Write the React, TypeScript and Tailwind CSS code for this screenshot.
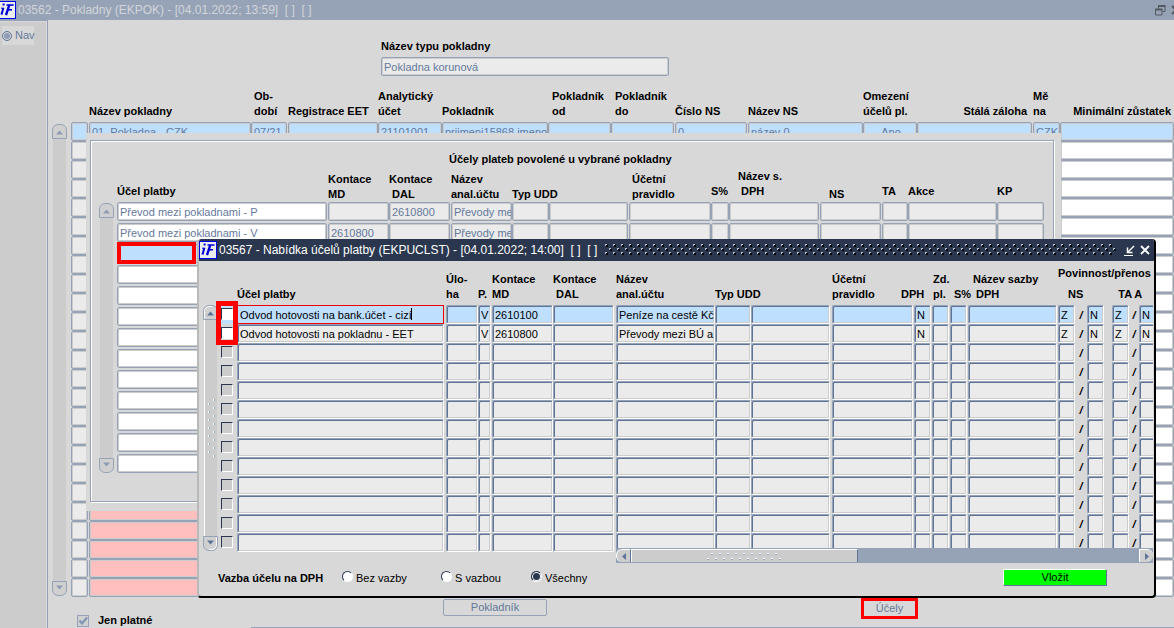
import React from "react";

type Column = {
  head?: string;
  headClass?: string;
  textClass?: string;
  name: string;
  width: string;
  gap?: string;
  align?: string;
  tone?: string;
};

const mainColumns: Column[] = [
  { name: "Výběr", width: "w-[18px]", gap: "pr-px" },
  { name: "Název pokladny", head: "Název pokladny", width: "w-[162px]" },
  { name: "Období", head: "Ob-\ndobí", width: "w-[37px]", gap: "pr-px", headClass: "pl-[3px]" },
  { name: "Registrace EET", head: "Registrace EET", width: "w-[90px]" },
  { name: "Analytický účet", head: "Analytický\núčet", width: "w-[64px]" },
  { name: "Pokladník", head: "Pokladník", width: "w-[106px]" },
  { name: "Pokladník od", head: "Pokladník\nod", width: "w-[63px]", headClass: "pl-[4px]" },
  { name: "Pokladník do", head: "Pokladník\ndo", width: "w-[64px]", gap: "pr-px", headClass: "pl-[4px]" },
  { name: "Číslo NS", head: "Číslo NS", width: "w-[73px]", gap: "pr-px" },
  { name: "Název NS", head: "Název NS", width: "w-[115px]" },
  { name: "Omezení účelů pl.", head: "Omezení\núčelů pl.", width: "w-[54px]", align: "text-center" },
  { name: "Stálá záloha", head: "Stálá záloha", width: "w-[116px]", gap: "pr-px", headClass: "text-right pr-[6px]" },
  { name: "Měna", head: "Mě\nna", width: "w-[27px]" },
  { name: "Minimální zůstatek", head: "Minimální zůstatek", width: "w-auto", headClass: "text-right pr-[3px]", tone: "bg-white" },
];

const mainFirstRow = [
  "", "01. Pokladna - CZK", "07/21", "", "21101001", "prijmeni15868 jmeno1", "", "", "0", "název 0", "Ano", "", "CZK", "",
];

const purposeColumns: Column[] = [
  { name: "Účel platby", head: "Účel platby", width: "w-[211px]", gap: "pr-px", headClass: "pb-[3px]", tone: "bg-white" },
  { name: "Kontace MD", head: "Kontace\nMD", width: "w-[61px]" },
  { name: "Kontace DAL", head: "Kontace\n DAL", width: "w-[62px]", gap: "pr-px" },
  { name: "Název anal.účtu", head: "Název\nanal.účtu", width: "w-[61px]" },
  { name: "Typ UDD", head: "Typ UDD", width: "w-[37px]" },
  { name: "Typ UDD popis", width: "w-[80px]", gap: "pr-px" },
  { name: "Účetní pravidlo", head: "Účetní\npravidlo", width: "w-[82px]", headClass: "pl-[3px]" },
  { name: "S%", head: "S%", width: "w-[18px]", headClass: "pb-[3px]" },
  { name: "Název s. DPH", head: "Název s.\n DPH", width: "w-[91px]", gap: "pr-px", headClass: "pl-[9px] pb-[3px]" },
  { name: "NS", head: "NS", width: "w-[62px]", gap: "pr-px", headClass: "pl-[9px]" },
  { name: "TA", head: "TA", width: "w-[26px]", headClass: "pb-[3px]" },
  { name: "Akce", head: "Akce", width: "w-[89px]", headClass: "pb-[3px]" },
  { name: "KP", head: "KP", width: "w-[47px]", headClass: "pb-[3px]" },
];

const purposeRows = [
  ["Převod mezi pokladnami - P", "", "2610800", "Převody me"],
  ["Převod mezi pokladnami - V", "2610800", "", "Převody me"],
];

const offerLeft: Column[] = [
  { name: "Účel platby", head: "Účel platby", width: "w-[209px]", gap: "pr-[2px]" },
  { name: "Úloha", head: "Úlo-\nha", width: "w-[32px]" },
  { name: "P.", head: "P.", width: "w-[14px]", gap: "pr-px" },
  { name: "Kontace MD", head: "Kontace\nMD", width: "w-[61px]" },
  { name: "Kontace DAL", head: "Kontace\n DAL", width: "w-[63px]", gap: "pr-[2px]" },
];

const offerRight: Column[] = [
  { name: "Název anal.účtu", head: "Název\nanal.účtu", width: "w-[99px]" },
  { name: "Typ UDD", head: "Typ UDD", width: "w-[36px]" },
  { name: "Typ UDD popis", width: "w-[81px]", gap: "pr-[2px]" },
  { name: "Účetní pravidlo", head: "Účetní\npravidlo", width: "w-[82px]", gap: "pr-px" },
  { name: "DPH", head: "DPH", width: "w-[18px]", gap: "pr-px", textClass: "-ml-[13px]" },
  { name: "Zd. pl.", head: "Zd.\npl.", width: "w-[18px]", gap: "pr-px", headClass: "pl-px" },
  { name: "S%", head: "S%", width: "w-[18px]", gap: "pr-px", headClass: "pl-[4px]" },
  { name: "Název sazby DPH", head: "Název sazby\n DPH", width: "w-[90px]", gap: "pr-px", headClass: "pl-[5px]" },
  { name: "NS", width: "w-[17px]" },
  { name: "/", width: "w-[12px]" },
  { name: "NS přenos", width: "w-[25px]", gap: "pr-[8px]" },
  { name: "TA", width: "w-[17px]" },
  { name: "/", width: "w-[10px]" },
  { name: "TA přenos", width: "w-[17px]" },
];

const offerLeftRows = [
  ["Odvod hotovosti na bank.účet - cizí", "", "V", "2610100", ""],
  ["Odvod hotovosti na pokladnu - EET", "", "V", "2610800", ""],
];
const offerRightRows = [
  ["Peníze na cestě Kč", "", "", "", "N", "", "", "", "Z", "/", "N", "Z", "/", "N"],
  ["Převody mezi BÚ a", "", "", "", "N", "", "", "", "Z", "/", "N", "Z", "/", "N"],
];

const range = (n: number) => Array.from({ length: n }, (_, i) => i);

const flatCell =
  "block h-[19px] w-full rounded-[2px] border border-[#96a3b6] pl-[2px] text-[11px] text-[#64799b] shadow-[inset_1px_1px_0_#ccc,inset_-1px_-1px_0_#ccc] outline-none";
const sunkCell =
  "block h-[19px] w-full rounded-[2px] border border-t-[#96a3b6] border-l-[#96a3b6] border-r-white border-b-white pl-[2px] text-[11px] text-black shadow-[inset_1px_1px_0_#5f7496,inset_-1px_-1px_0_#ccc] outline-none";
const focusCell = "block h-[19px] w-full border border-[#f00000] pl-[2px] text-[11px] text-black outline-none";

function Logo() {
  return (
    <svg width="18" height="18" viewBox="0 0 18 18" className="shrink-0" aria-hidden="true">
      <rect x="0.5" y="0.5" width="17" height="17" fill="#eceded" stroke="#0000f0" />
      <path d="M5.400 7 3.600 13" stroke="#0000d8" strokeWidth="2" fill="none" />
      <path d="M3 7.200h3M2.600 13h2.400" stroke="#0000d8" strokeWidth="1" />
      <path d="M4.600 3.500h2" stroke="#0000d8" strokeWidth="2" />
      <path d="M15.600 4H8.500" stroke="#0000d8" strokeWidth="1.600" />
      <path d="M11.300 4 8 14.200" stroke="#0000d8" strokeWidth="2.400" />
      <path d="M9.800 8.800h4.200" stroke="#0000d8" strokeWidth="1.600" />
    </svg>
  );
}

function ScrollButton({ down, strong }: { down?: boolean; strong?: boolean }) {
  const tri = strong ? "#5c7396" : "#8d9db5";
  return (
    <button type="button" aria-label={down ? "Dolů" : "Nahoru"} className="block h-[15px] w-[15px]">
      <svg width="15" height="15" viewBox="0 0 15 15" className={down ? "rotate-180" : ""}>
        <path d="M.5 14.500V6C.5 2.500 3.500.5 6 .5h3c2.500 0 5.500 2 5.500 5.500v8.500z" fill="#d0d0d0" stroke="#96a3b6" />
        {strong && <path d="M1.500 13.500V6.200C1.500 3.500 4 1.500 6.200 1.500h3" fill="none" stroke="#fff" />}
        <path d="M4 10.500 7.500 6.500 11 10.500z" fill={tri} />
      </svg>
    </button>
  );
}

function VerticalScroll({ strong }: { strong?: boolean }) {
  return (
    <div className="flex w-[15px] shrink-0 flex-col">
      <ScrollButton strong={strong} />
      <div
        className={
          strong
            ? "mx-px flex flex-1 items-center justify-center border-l border-white bg-[#ccc]"
            : "mx-px flex-1 bg-[#ccc]"
        }
      >
        {strong && (
          <svg width="9" height="60" aria-hidden="true">
            {range(15).map((i) => (
              <g key={i}>
                <rect x={i % 2 ? 1 : 6} y={i * 4 + 1} width="2" height="2" fill="#96a3b6" />
                <rect x={i % 2 ? 1 : 6} y={i * 4 + 1} width="1" height="2" fill="#fff" />
              </g>
            ))}
          </svg>
        )}
      </div>
      <ScrollButton down strong={strong} />
    </div>
  );
}

function HeadCell({ column, base }: { column: Column; base: string }) {
  return (
    <th scope="col" className={`${column.headClass ?? ""} ${base} align-bottom whitespace-pre`}>
      {column.textClass ? <span className={column.textClass}>{column.head}</span> : column.head}
    </th>
  );
}

function Columns({ columns }: { columns: Column[] }) {
  return (
    <>
      {columns.map((c, i) => (
        <col key={i} className={c.width} />
      ))}
    </>
  );
}

function MainTable() {
  return (
    <table className="flex-1 table-fixed border-separate border-spacing-0 text-left">
      <colgroup>
        <Columns columns={mainColumns} />
      </colgroup>
      <thead>
        <tr>
          {mainColumns.map((c) => (
            <HeadCell key={c.name} column={c} base="h-[33px] pt-0 pb-[3px]" />
          ))}
        </tr>
      </thead>
      <tbody>
        {range(25).map((r) => (
          <tr key={r}>
            {mainColumns.map((c, i) => {
              const tone = r === 0 ? "bg-[#bfdfff]" : i === 1 && r > 19 ? "bg-[#ffbfbf]" : c.tone ?? "bg-[#ebebeb]";
              return (
                <td key={c.name} className={`p-0 ${c.gap ?? ""}`}>
                  <input
                    aria-label={`${c.name} ${r + 1}`}
                    defaultValue={r === 0 ? mainFirstRow[i] : ""}
                    className={`${flatCell} ${tone} ${c.align ?? ""}`}
                  />
                </td>
              );
            })}
          </tr>
        ))}
      </tbody>
    </table>
  );
}

function PurposePanel() {
  return (
    <section className="absolute top-[133px] left-[86px] w-[975px] bg-[#d8d8d8] pt-[7px] pr-[7px] pb-[9px] pl-[4px]">
      <div className="border border-[#96a3b6] pt-[11px] pb-[26px] pl-[8px] shadow-[inset_1px_1px_0_#fff,1px_1px_0_#fff]">
        <h2 className="pl-[350px] leading-[15px] font-bold">Účely plateb povolené u vybrané pokladny</h2>
        <div className="mt-[2px] flex gap-[3px]">
          <div className="flex pt-[34px] pb-[2px]">
            <VerticalScroll />
          </div>
          <table className="w-[927px] table-fixed border-separate border-spacing-0 text-left">
            <colgroup>
              <Columns columns={purposeColumns} />
            </colgroup>
            <thead>
              <tr>
                {purposeColumns.map((c) => (
                  <HeadCell key={c.name} column={c} base="h-[33px] pt-0" />
                ))}
              </tr>
            </thead>
            <tbody>
              {range(13).map((r) => (
                <tr key={r}>
                  {purposeColumns.map((c, i) => (
                    <td key={c.name} className={`relative p-0 ${c.gap ?? ""}`}>
                      <input
                        aria-label={`${c.name} ${r + 1}`}
                        defaultValue={purposeRows[r]?.[i] ?? ""}
                        className={`${flatCell} mb-[2px] ${r === 2 ? "bg-[#bfdfff]" : c.tone ?? "bg-[#ebebeb]"}`}
                      />
                      {r === 2 && i === 0 && (
                        <span className="pointer-events-none absolute -top-[2px] left-0 h-[22px] w-[79px] border-4 border-[#ff0000]" />
                      )}
                    </td>
                  ))}
                </tr>
              ))}
            </tbody>
          </table>
        </div>
      </div>
    </section>
  );
}

function OfferRow({ columns, values, row }: { columns: Column[]; values?: string[]; row: number }) {
  return (
    <>
      {columns.map((c, i) => {
        if (c.name === "/") {
          return (
            <td key={i} className="h-[19px] p-0 pt-px text-center leading-[18px] font-bold italic">
              /
            </td>
          );
        }
        const focused = row === 0 && c.name === "Účel platby";
        return (
          <td key={i} className={`relative p-0 ${c.gap ?? ""}`}>
            <input
              aria-label={`${c.name} ${row + 1}`}
              defaultValue={values?.[i] ?? ""}
              className={`${focused ? focusCell : sunkCell} ${row === 0 ? "bg-[#bfdfff]" : "bg-[#ebebeb]"}`}
            />
          </td>
        );
      })}
    </>
  );
}

function OfferDialog() {
  return (
    <section
      role="dialog"
      aria-label="Nabídka účelů platby"
      className="absolute top-[239px] left-[197px] w-[959px] overflow-hidden rounded-[4px] border-r-2 border-b-2 border-l-2 border-r-black border-b-black border-l-[#b9b9b9] bg-[#d8d8d8]"
    >
      <header className="flex h-[22px] items-center bg-[#2a374e] pr-[4px] text-[12px] text-white">
        <Logo />
        <h2 className="ml-[2px] whitespace-pre">03567 - Nabídka účelů platby (EKPUCLST) - [04.01.2022; 14:00]  [ ]  [ ]</h2>
        <svg className="mx-[8px] h-[12px] min-w-0 flex-1" aria-hidden="true">
          <defs>
            <pattern id="grip" width="8" height="8" patternUnits="userSpaceOnUse">
              <rect x="1" y="1" width="2" height="2" fill="#000" />
              <rect x="0" y="0" width="2" height="1" fill="#b4bfce" />
              <rect x="0" y="1" width="1" height="1" fill="#b4bfce" />
              <rect x="5" y="5" width="2" height="2" fill="#000" />
              <rect x="4" y="4" width="2" height="1" fill="#b4bfce" />
              <rect x="4" y="5" width="1" height="1" fill="#b4bfce" />
            </pattern>
          </defs>
          <rect width="100%" height="100%" fill="url(#grip)" />
        </svg>
        <button type="button" aria-label="Minimalizovat" className="mr-[5px]">
          <svg width="11" height="11" viewBox="0 0 11 11" stroke="#fff" fill="none">
            <path d="M0 10.500h9" />
            <path d="M10 1 4 7" strokeWidth="1.500" />
            <path d="M3.500 2.500v5h5" strokeWidth="1.500" />
          </svg>
        </button>
        <button type="button" aria-label="Zavřít">
          <svg width="10" height="10" viewBox="0 0 10 10" stroke="#fff" strokeWidth="1.800">
            <path d="M1 1l8 8M9 1l-8 8" />
          </svg>
        </button>
      </header>

      <div className="flex pt-[5px] pl-[4px]">
        <div className="flex pt-[39px] pb-[12px]">
          <VerticalScroll strong />
        </div>
        <table className="w-[398px] shrink-0 table-fixed border-separate border-spacing-0 self-start text-left">
          <colgroup>
            <col className="w-[19px]" />
            <Columns columns={offerLeft} />
          </colgroup>
          <thead>
            <tr>
              <th scope="col" aria-label="Výběr" />
              {offerLeft.map((c) => (
                <HeadCell key={c.name} column={c} base="h-[39px] pb-[3px]" />
              ))}
            </tr>
          </thead>
          <tbody>
            {range(13).map((r) => (
              <tr key={r}>
                <td className={`p-0 ${r === 0 ? "bg-[#bfdfff]" : ""}`}>
                  <input
                    type="checkbox"
                    aria-label={`Vybrat ${r + 1}`}
                    className={`mb-px ml-[3px] block h-[12px] w-[12px] appearance-none border border-t-[#2a374e] border-l-[#2a374e] border-r-white border-b-white ${r < 2 ? "bg-white" : "bg-[#ccc]"}`}
                  />
                </td>
                <OfferRow columns={offerLeft} values={offerLeftRows[r]} row={r} />
              </tr>
            ))}
          </tbody>
        </table>
        <div className="mr-px min-w-0 flex-1">
          <div className="h-[282px] overflow-hidden">
            <table className="w-[540px] table-fixed border-separate border-spacing-0 text-left">
              <colgroup>
                <Columns columns={offerRight} />
              </colgroup>
              <thead>
                <tr>
                  {offerRight.slice(0, 8).map((c) => (
                    <HeadCell key={c.name} column={c} base="h-[39px] pb-[3px]" />
                  ))}
                  <th scope="colgroup" colSpan={6} className="p-0 pb-[3px] align-bottom whitespace-pre">
                    <div className="mb-[6px]">Povinnost/přenos</div>
                    <div className="flex gap-[35px] pl-[10px]">
                      <span>NS</span>
                      <span>TA A</span>
                    </div>
                  </th>
                </tr>
              </thead>
              <tbody>
                {range(13).map((r) => (
                  <tr key={r}>
                    <OfferRow columns={offerRight} values={offerRightRows[r]} row={r} />
                  </tr>
                ))}
              </tbody>
            </table>
          </div>
          <div className="flex h-[15px] bg-[#96a3b6] py-px">
            <button type="button" aria-label="Vlevo" className="w-[15px] rounded-l-[6px] border-t border-r border-l border-t-white border-r-[#5f7496] border-l-white bg-[#ccc]">
              <svg width="13" height="11" viewBox="0 0 13 11">
                <path d="M9 2v7L5 5.500z" fill="#5f7496" />
              </svg>
            </button>
            <div className="flex w-[227px] items-center justify-center border-t border-r border-l border-t-white border-r-[#5f7496] border-l-white bg-[#ccc]">
              <svg width="78" height="9" aria-hidden="true">
                {range(19).map((i) => (
                  <g key={i}>
                    <rect x={i * 4 + 1} y={i % 2 ? 1 : 6} width="2" height="2" fill="#96a3b6" />
                    <rect x={i * 4 + 1} y={i % 2 ? 1 : 6} width="2" height="1" fill="#fff" />
                  </g>
                ))}
              </svg>
            </div>
            <button type="button" aria-label="Vpravo" className="ml-auto w-[14px] rounded-r-[6px] border-t border-l border-white bg-[#d0d0d0]">
              <svg width="13" height="11" viewBox="0 0 13 11">
                <path d="M5 2v7l4-3.500z" fill="#5f7496" />
              </svg>
            </button>
          </div>
        </div>
      </div>

      <footer className="flex h-[33px] items-start pt-[6px] pr-[47px] pl-[19px]">
        <fieldset className="flex items-center pt-[2px]">
          <legend className="float-left w-[124px] leading-[15px] font-bold">Vazba účelu na DPH</legend>
          {[
            ["Bez vazby", "w-[99px]"],
            ["S vazbou", "w-[90px]"],
            ["Všechny", "w-[90px]"],
          ].map(([text, width], i) => (
            <label key={text} className={`flex items-start gap-[3px] leading-[15px] ${width}`}>
              <input
                type="radio"
                name="vazba"
                defaultChecked={i === 2}
                className="h-[11px] w-[11px] appearance-none rounded-full border border-t-[#2a374e] border-l-[#2a374e] border-r-white border-b-white bg-white checked:bg-[#2a374e] checked:shadow-[inset_0_0_0_1px_#fff]"
              />
              {text}
            </label>
          ))}
        </fieldset>
        <button type="button" className="ml-auto h-[17px] w-[104px] border border-t-white border-l-white border-r-[#5f7496] border-b-[#5f7496] bg-[#00ff00] text-center leading-[15px]">
          Vložit
        </button>
      </footer>
      <span className="pointer-events-none absolute top-[62px] left-[17px] h-[44px] w-[22px] border-[5px] border-[#ff0000]" />
      <span className="pointer-events-none absolute top-[69px] left-[212px] h-[12px] w-px bg-black" />
    </section>
  );
}

export default function App() {
  return (
    <div className="relative flex min-h-screen min-w-[1174px] flex-col overflow-hidden bg-[#d8d8d8] font-['Liberation_Sans',Arial,sans-serif] text-[11px] leading-[15px] text-black">
      <header className="flex h-[20px] items-center bg-[#96a3b6] text-[12px] text-[#d2d5da]">
        <div className="-ml-[2px]">
          <Logo />
        </div>
        <h1 className="ml-[2px] whitespace-pre">03562 - Pokladny (EKPOK) - [04.01.2022; 13:59]  [ ]  [ ]</h1>
        <div className="-mr-[7px] ml-auto flex gap-[5px]">
          <button type="button" aria-label="Obnovit">
            <svg width="11" height="11" viewBox="0 0 11 11" fill="none" stroke="#555a63">
              <path d="M3.500 4V1h6.500v5.500H7.500" />
              <path d="M3 1h7.500" strokeWidth="2" />
              <path d="M.5 4.500h6.500v5.500H.5z" />
              <path d="M0 4.500h7.500" strokeWidth="2" />
            </svg>
          </button>
          <button type="button" aria-label="Zavřít">
            <svg width="10" height="10" viewBox="0 0 10 10" stroke="#555a63" strokeWidth="2">
              <path d="M1 1l8 8M9 1l-8 8" />
            </svg>
          </button>
        </div>
      </header>

      <div className="flex flex-1">
        <nav className="w-[48px] shrink-0 border-t border-r border-[#96a3b6] bg-[#ccc] pt-[5px] pl-[2px] shadow-[inset_-1px_1px_0_#d8d8d8]">
          <label className="flex h-[19px] w-[32px] items-center gap-[3px] bg-[#d8d8d8] text-[#64799b]">
            <input
              type="radio"
              defaultChecked
              className="h-[10px] w-[10px] shrink-0 appearance-none rounded-full border border-[#64799b] bg-[#8d9db5] shadow-[inset_0_0_0_1px_#d8d8d8]"
            />
            Nav
          </label>
        </nav>

        <main className="flex min-w-0 flex-1 flex-col">
          <div className="flex flex-col items-start pt-[19px] pl-[333px]">
            <label htmlFor="typ" className="font-bold">
              Název typu pokladny
            </label>
            <div className="mt-[3px] w-[288px]">
              <input id="typ" defaultValue="Pokladna korunová" className={`${flatCell} bg-[#ebebeb]`} />
            </div>
          </div>

          <div className="mt-[13px] flex pl-[4px]">
            <div className="mr-[4px] flex pt-[35px] pb-px">
              <VerticalScroll />
            </div>
            <MainTable />
          </div>

          <div className="flex flex-1 items-stretch">
            <div className="w-[203px] pt-[16px] pl-[29px]">
              <label className="flex items-center gap-[9px] font-bold">
                <span className="relative flex">
                  <input type="checkbox" defaultChecked className="h-[12px] w-[12px] appearance-none border border-[#96a3b6] bg-[#d0d0d0]" />
                  <svg width="12" height="12" viewBox="0 0 12 12" className="pointer-events-none absolute inset-0" aria-hidden="true">
                    <path d="M2.500 5.500 5 8.500 10 2.500" stroke="#8195b5" strokeWidth="2.200" fill="none" />
                  </svg>
                </span>
                Jen platné
              </label>
            </div>
            <div className="flex h-[31px] flex-1 items-start border-b border-[#96a3b6] pt-px pl-[192px] text-[#64799b]">
              <button type="button" className="mt-px h-[17px] w-[104px] rounded-[2px] border border-[#96a3b6] leading-[15px]">
                Pokladník
              </button>
              <button type="button" className="ml-[314px] h-[21px] w-[57px] border-[3px] border-[#ff0000] leading-[15px]">
                Účely
              </button>
            </div>
          </div>
        </main>
      </div>

      <PurposePanel />
      <OfferDialog />
    </div>
  );
}
